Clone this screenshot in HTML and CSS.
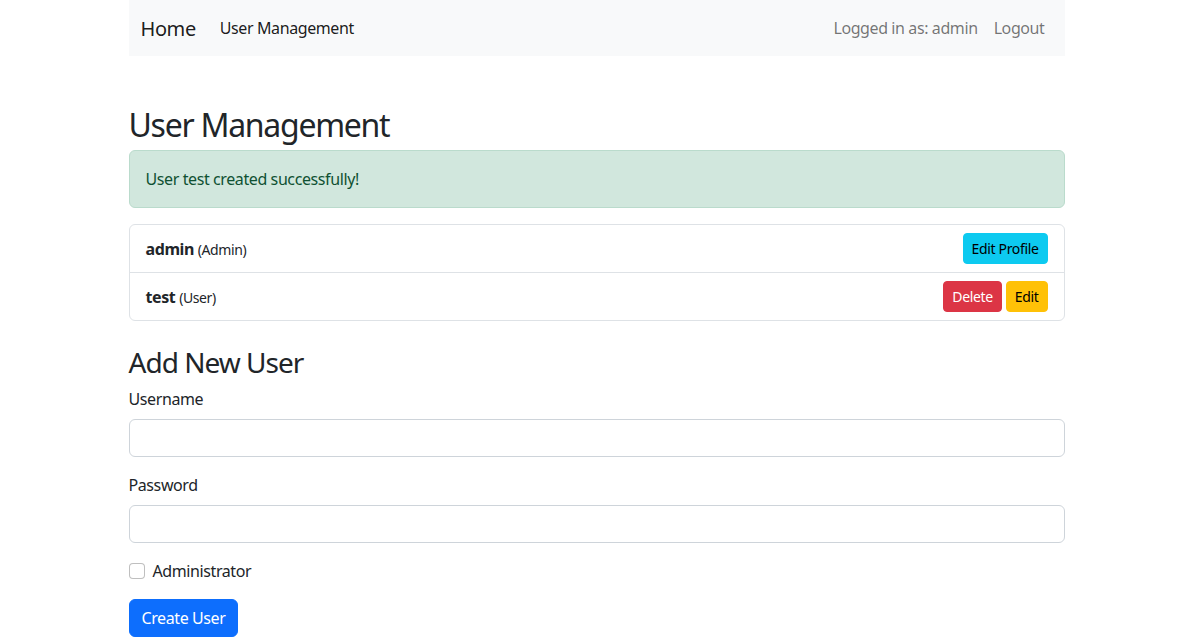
FILE: index.html
```html
<!DOCTYPE html>
<html lang="en">
<head>
<meta charset="utf-8">
<title>User Management</title>
<link rel="stylesheet" href="styles.css">
</head>
<body>
<div class="container">
  <nav class="navbar">
    <div class="nav-left">
      <a class="brand" href="#">Home</a>
      <a class="nav-link active" href="#">User Management</a>
    </div>
    <div class="nav-right">
      <span class="navbar-text">Logged in as: admin</span>
      <a class="nav-link" href="#">Logout</a>
    </div>
  </nav>

  <main class="content">
    <h2 class="h2">User Management</h2>
    <div class="alert">User test created successfully!</div>

    <ul class="list-group">
      <li class="list-item">
        <span><strong>admin</strong> <small>(Admin)</small></span>
        <span class="actions"><button class="btn btn-sm btn-info">Edit Profile</button></span>
      </li>
      <li class="list-item">
        <span><strong>test</strong> <small>(User)</small></span>
        <span class="actions">
          <button class="btn btn-sm btn-danger">Delete</button>
          <button class="btn btn-sm btn-warning">Edit</button>
        </span>
      </li>
    </ul>

    <h3 class="h3">Add New User</h3>
    <form class="form">
      <div class="field">
        <label class="form-label" for="username">Username</label>
        <input class="form-control" id="username" type="text">
      </div>
      <div class="field">
        <label class="form-label" for="password">Password</label>
        <input class="form-control" id="password" type="password">
      </div>
      <div class="field form-check">
        <input class="check-input" id="isadmin" type="checkbox">
        <label class="check-label" for="isadmin">Administrator</label>
      </div>
      <button type="button" class="btn btn-primary">Create User</button>
    </form>
  </main>
</div>
</body>
</html>
```
FILE: styles.css
```css
* { box-sizing: border-box; }
html, body { margin: 0; padding: 0; }
body {
  font-family: "Noto Sans", "Open Sans", sans-serif;
  font-size: 16px;
  line-height: 1.5;
  letter-spacing: -0.025em;
  color: #212529;
  background: #fff;
}
.container {
  width: 960px;
  margin: 0 auto;
  padding: 0 12px;
}
.navbar {
  display: flex;
  align-items: center;
  justify-content: space-between;
  background: #f8f9fa;
  padding: 8px 12px;
  height: 56px;
}
.nav-left, .nav-right { display: flex; align-items: center; }
.brand {
  font-size: 20px;
  line-height: 30px;
  color: rgba(0,0,0,.9);
  text-decoration: none;
  margin-right: 16px;
  padding: 6px 0 4px;
}
.nav-link {
  color: rgba(0,0,0,.55);
  text-decoration: none;
  padding: 8px;
}
.nav-link.active { color: rgba(0,0,0,.9); }
.navbar-text {
  color: rgba(0,0,0,.55);
  margin-right: 8px;
}
.content { padding-top: 50px; }
.h2 {
  font-size: 32px;
  font-weight: 400;
  line-height: 1.2;
  letter-spacing: -0.04em;
  margin: 0 0 6px;
}
.h3 {
  font-size: 28px;
  font-weight: 400;
  line-height: 1.2;
  letter-spacing: -0.035em;
  margin: 25px 0 7px;
}
.alert {
  background: #d1e7dd;
  border: 1px solid #badbcc;
  color: #0f5132;
  border-radius: 6px;
  padding: 16px;
  margin-bottom: 16px;
}
.list-group {
  list-style: none;
  margin: 0;
  padding: 0;
  border: 1px solid #dee2e6;
  border-radius: 6px;
}
.list-item {
  display: flex;
  justify-content: space-between;
  align-items: center;
  padding: 8px 16px;
  height: 47px;
}
.list-item + .list-item { border-top: 1px solid #dee2e6; height: 48px; }
.list-item strong { font-weight: 700; }
.list-item small { font-size: 14px; }
.actions { display: flex; gap: 4px; }
.btn {
  font-family: inherit;
  font-size: 16px;
  line-height: 1.5;
  letter-spacing: -0.025em;
  padding: 6px 12px;
  border: 1px solid transparent;
  border-radius: 6px;
  cursor: pointer;
}
.btn-sm {
  font-size: 14px;
  padding: 4px 8px;
  border-radius: 4px;
}
.btn-info { background: #0dcaf0; border-color: #0dcaf0; color: #000; }
.btn-danger { background: #dc3545; border-color: #dc3545; color: #fff; }
.btn-warning { background: #ffc107; border-color: #ffc107; color: #000; }
.btn-primary { background: #0d6efd; border-color: #0d6efd; color: #fff; }
.field { margin-bottom: 16px; }
.form-label { display: block; margin-bottom: 8px; }
.form-control {
  display: block;
  width: 100%;
  height: 38px;
  padding: 6px 12px;
  font-family: inherit;
  font-size: 16px;
  border: 1px solid #ced4da;
  border-radius: 6px;
  background: #fff;
}
.form-check {
  display: flex;
  align-items: flex-start;
  min-height: 24px;
}
.check-input {
  appearance: none;
  -webkit-appearance: none;
  width: 16px;
  height: 16px;
  margin: 4px 8px 0 0;
  border: 1px solid rgba(0,0,0,.25);
  border-radius: 4px;
  background: #fff;
  flex: none;
}
```
